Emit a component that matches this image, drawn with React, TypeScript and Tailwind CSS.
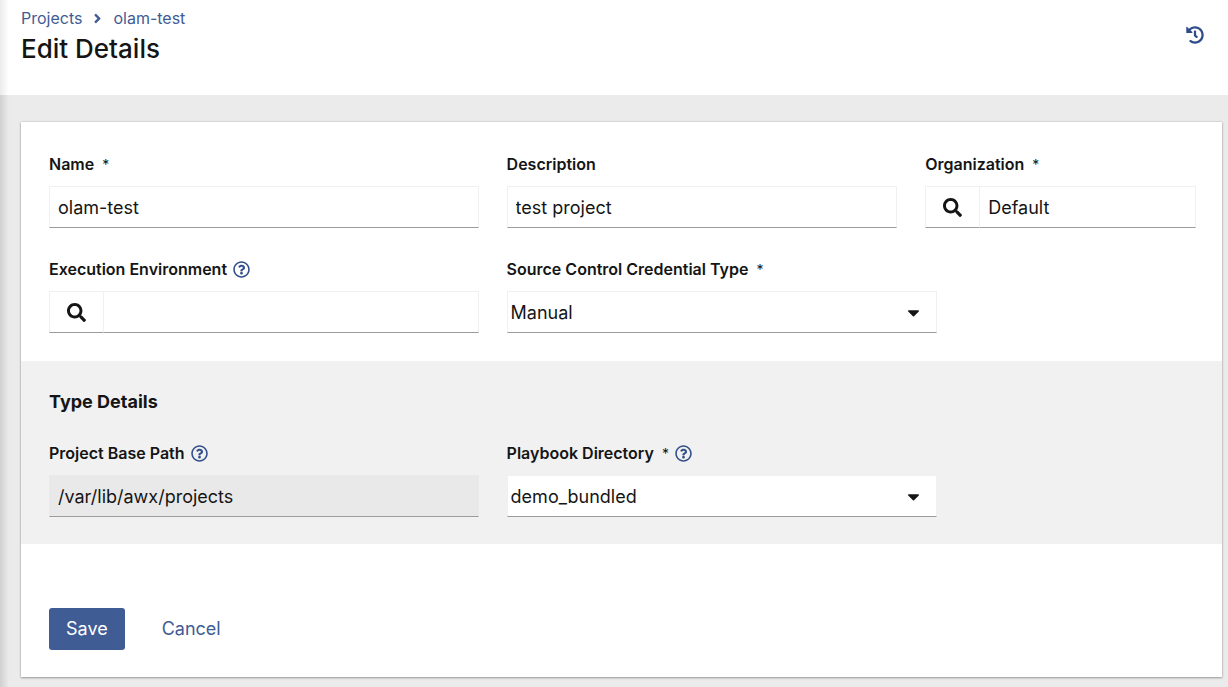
import { useState } from 'react'
import type { ReactNode } from 'react'
import {
  FaAngleRight,
  FaCaretDown,
  FaHistory,
  FaRegQuestionCircle,
  FaSearch,
} from 'react-icons/fa'

const fieldBox =
  'h-[42px] w-full min-w-0 border border-[#f0f0f0] border-b-[#999b9d] text-lg text-[#151515] outline-none focus:border-b-[#3f5c94]'

interface FieldProps {
  id: string
  label: string
  required?: boolean
  help?: boolean
  children: ReactNode
}

function Field({ id, label, required, help, children }: FieldProps) {
  return (
    <div className="min-w-0">
      <div className="mb-2 flex h-7 items-center gap-[6px] whitespace-nowrap">
        <label htmlFor={id} className="text-base font-semibold">
          {label}
          {required && (
            <span aria-hidden="true" className="ml-2 text-sm font-normal">
              *
            </span>
          )}
        </label>
        {help && (
          <button type="button" aria-label={`More information for ${label}`} className="text-[#34508c]">
            <FaRegQuestionCircle size={17} />
          </button>
        )}
      </div>
      {children}
    </div>
  )
}

function Lookup({ id, value }: { id: string; value: string }) {
  const [text, setText] = useState(value)
  return (
    <div className="flex">
      <button
        type="button"
        aria-label="Search"
        className="flex h-[42px] w-[54px] shrink-0 items-center justify-center border border-r-0 border-[#f0f0f0] border-b-[#999b9d]"
      >
        <FaSearch size={19} />
      </button>
      <input
        id={id}
        value={text}
        onChange={(e) => setText(e.target.value)}
        className={`${fieldBox} bg-white px-2`}
      />
    </div>
  )
}

function Select({ id, options }: { id: string; options: string[] }) {
  return (
    <div className="relative">
      <select id={id} className={`${fieldBox} appearance-none bg-white pt-px pr-10 pl-[3px]`}>
        {options.map((option) => (
          <option key={option}>{option}</option>
        ))}
      </select>
      <FaCaretDown
        size={19}
        className="pointer-events-none absolute inset-y-0 right-[14px] my-auto"
      />
    </div>
  )
}

export default function App() {
  return (
    <div className="flex min-h-screen flex-col bg-[#ebebeb] font-['Inter','Open_Sans',sans-serif] text-[#151515]">
      <header className="flex items-start justify-between bg-white bg-[linear-gradient(to_right,#ebebeb,#fff_9px)] pt-2 pr-6 pb-[25px] pl-[21px]">
        <div>
          <nav aria-label="Breadcrumb" className="flex h-5 items-center text-base text-[#3f5c94]">
            <a href="#projects">Projects</a>
            <FaAngleRight size={15} className="mx-2" />
            <a href="#olam-test">olam-test</a>
          </nav>
          <h1 className="text-[26px] leading-[42px] font-medium">Edit Details</h1>
        </div>
        <button type="button" aria-label="Activity history" className="pt-[18px] text-[#2f4b88]">
          <FaHistory size={18} />
        </button>
      </header>

      <main className="flex-1 bg-[linear-gradient(to_right,#d0d0d0,#ebebeb_9px)] pt-[27px] pr-[6px] pb-[10px] pl-[21px]">
        <form
          onSubmit={(e) => e.preventDefault()}
          className="bg-white shadow-[0_1px_2px_rgba(3,3,3,0.3),0_0_2px_rgba(3,3,3,0.2)]"
        >
          <div className="flex flex-col gap-[27px] pt-7 pr-[26px] pb-7 pl-7">
            <div className="grid grid-cols-[430fr_391fr_271fr] gap-x-7">
              <Field id="name" label="Name" required>
                <input id="name" defaultValue="olam-test" className={`${fieldBox} bg-white px-2`} />
              </Field>
              <Field id="description" label="Description">
                <input id="description" defaultValue="test project" className={`${fieldBox} bg-white px-2`} />
              </Field>
              <Field id="organization" label="Organization" required>
                <Lookup id="organization" value="Default" />
              </Field>
            </div>
            <div className="grid grid-cols-[430fr_431fr_231fr] gap-x-7">
              <Field id="environment" label="Execution Environment" help>
                <Lookup id="environment" value="" />
              </Field>
              <Field id="credential" label="Source Control Credential Type" required>
                <Select id="credential" options={['Manual', 'Git', 'Subversion']} />
              </Field>
            </div>
          </div>

          <section className="bg-[#f1f1f1] pt-[27px] pr-[26px] pb-[27px] pl-7">
            <h2 className="mb-[23px] text-lg leading-7 font-bold">Type Details</h2>
            <div className="grid grid-cols-[430fr_431fr_231fr] gap-x-7">
              <Field id="basePath" label="Project Base Path" help>
                <input
                  id="basePath"
                  readOnly
                  value="/var/lib/awx/projects"
                  className={`${fieldBox} border-x-[#e9e9e9] border-t-[#e9e9e9] bg-[#e9e9e9] px-2`}
                />
              </Field>
              <Field id="playbook" label="Playbook Directory" required help>
                <Select id="playbook" options={['demo_bundled']} />
              </Field>
            </div>
          </section>

          <div className="flex gap-5 pt-16 pr-[26px] pb-[27px] pl-7">
            <button type="submit" className="h-[42px] rounded-[3px] bg-[#3f5c94] px-[17px] text-lg text-white">
              Save
            </button>
            <button type="button" className="h-[42px] px-[17px] text-lg text-[#3f5c94]">
              Cancel
            </button>
          </div>
        </form>
      </main>
    </div>
  )
}
